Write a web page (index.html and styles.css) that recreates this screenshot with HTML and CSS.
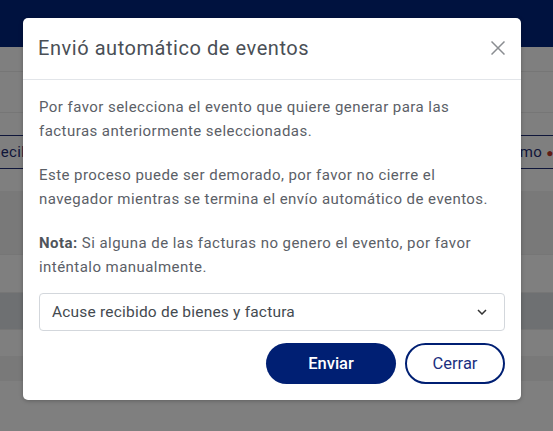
FILE: index.html
```html
<!DOCTYPE html>
<html lang="es">
<head>
<meta charset="utf-8">
<title>Envió automático de eventos</title>
<link rel="stylesheet" href="styles.css">
</head>
<body>
<div class="page">
  <header class="topbar"></header>
  <div class="row r1"></div>
  <div class="row r2"></div>
  <div class="row r3"></div>
  <div class="filter">
    <span class="f-left">Recibido</span>
    <span class="f-right">Reclamo <span class="dot">●</span></span>
  </div>
  <div class="row r4"></div>
  <div class="row r5 shade"></div>
  <div class="row r6"></div>
  <div class="row r7 selected"></div>
  <div class="row r8"></div>
  <div class="row r9 shade"></div>
</div>
<div class="backdrop"></div>
<div class="modal" role="dialog">
  <div class="modal-header">
    <h2 class="modal-title">Envió automático de eventos</h2>
    <button class="close" aria-label="Cerrar">
      <svg width="14" height="14" viewBox="0 0 14 14"><path d="M0.5 0.5 L13.5 13.5 M13.5 0.5 L0.5 13.5" stroke="#8a8d91" stroke-width="1.5" fill="none"/></svg>
    </button>
  </div>
  <div class="modal-body">
    <p>Por favor selecciona el evento que quiere generar para las facturas anteriormente seleccionadas.</p>
    <p>Este proceso puede ser demorado, por favor no cierre el navegador mientras se termina el envío automático de eventos.</p>
    <p><strong>Nota:</strong> Si alguna de las facturas no genero el evento, por favor inténtalo manualmente.</p>
    <div class="select">
      <span>Acuse recibido de bienes y factura</span>
      <svg width="10" height="6" viewBox="0 0 10 6"><path d="M1 1 L5 5 L9 1" stroke="#333" stroke-width="1.5" fill="none"/></svg>
    </div>
    <div class="actions">
      <button class="btn btn-primary">Enviar</button>
      <button class="btn btn-outline">Cerrar</button>
    </div>
  </div>
</div>
</body>
</html>
```
FILE: styles.css
```css
html, body {
  margin: 0;
  padding: 0;
}
body {
  width: 553px;
  height: 431px;
  overflow: hidden;
  position: relative;
  font-family: Roboto, "Liberation Sans", sans-serif;
  background: #fefefe;
}
.page {
  display: flex;
  flex-direction: column;
}
.topbar {
  height: 47px;
  background: #00257e;
}
.row {
  background: #ffffff;
  border-bottom: 1px solid #ececec;
}
.r1 { height: 24px; }
.r2 { height: 40px; }
.r3 { height: 22px; border-bottom: none; }
.filter {
  height: 32px;
  border-top: 1px solid #1f2d75;
  border-bottom: 1px solid #1f2d75;
  display: flex;
  justify-content: space-between;
  align-items: center;
  background: #fff;
  font-size: 15px;
  letter-spacing: 0.4px;
  color: #1f2d75;
}
.f-left { margin-left: -9px; }
.f-right { margin-right: -1px; }
.dot { color: #c0392b; font-size: 12px; }
.r4 { height: 22px; border-bottom: none; }
.shade { background: #f3f3f3; }
.r5 { height: 63px; }
.r6 { height: 37px; }
.r7 { height: 36px; }
.selected { background: #dde0e5; }
.r8 { height: 26px; border-bottom: none; }
.r9 { height: 25px; border-bottom: none; }
.backdrop {
  position: absolute;
  inset: 0;
  background: rgba(0, 0, 0, 0.5);
}
.modal {
  position: absolute;
  left: 23px;
  top: 18px;
  width: 498px;
  height: 382px;
  background: #fff;
  border-radius: 5px;
  box-shadow: 0 1px 4px rgba(0,0,0,0.25);
  display: flex;
  flex-direction: column;
  box-sizing: border-box;
}
.modal-header {
  height: 63px;
  box-sizing: border-box;
  border-bottom: 1px solid #e2e5e9;
  display: flex;
  align-items: center;
  justify-content: space-between;
  padding: 0 16px 1px 15px;
}
.modal-title {
  margin: 0;
  font-size: 20px;
  font-weight: 400;
  color: #4a4f56;
  letter-spacing: 0.55px;
}
.close {
  border: none;
  background: none;
  padding: 0;
  width: 14px;
  height: 14px;
  display: flex;
}
.modal-body {
  padding: 15px 16px 16px 16px;
  display: flex;
  flex-direction: column;
}
.modal-body p {
  margin: 0 0 20px 0;
  font-size: 15px;
  line-height: 24px;
  letter-spacing: 0.45px;
  color: #5b6067;
}
.modal-body p:nth-of-type(3) { margin-bottom: 14px; }
.modal-body strong { font-weight: 700; color: #50555b; }
.select {
  height: 38px;
  box-sizing: border-box;
  border: 1px solid #d3d7dc;
  border-radius: 4px;
  display: flex;
  align-items: center;
  justify-content: space-between;
  padding: 0 17px 0 12px;
  font-size: 15.5px;
  letter-spacing: 0.2px;
  color: #444a50;
}
.actions {
  margin-top: 12px;
  display: flex;
  justify-content: flex-end;
  gap: 9px;
}
.btn {
  height: 41px;
  border-radius: 21px;
  font-family: Roboto, "Liberation Sans", sans-serif;
  font-size: 16.5px;
  box-sizing: border-box;
  cursor: pointer;
}
.btn-primary {
  width: 130px;
  background: #001f73;
  border: none;
  color: #fff;
  font-weight: 500;
}
.btn-outline {
  width: 100px;
  background: #fff;
  border: 2px solid #001f73;
  color: #1a2f7f;
  font-weight: 400;
}
```
